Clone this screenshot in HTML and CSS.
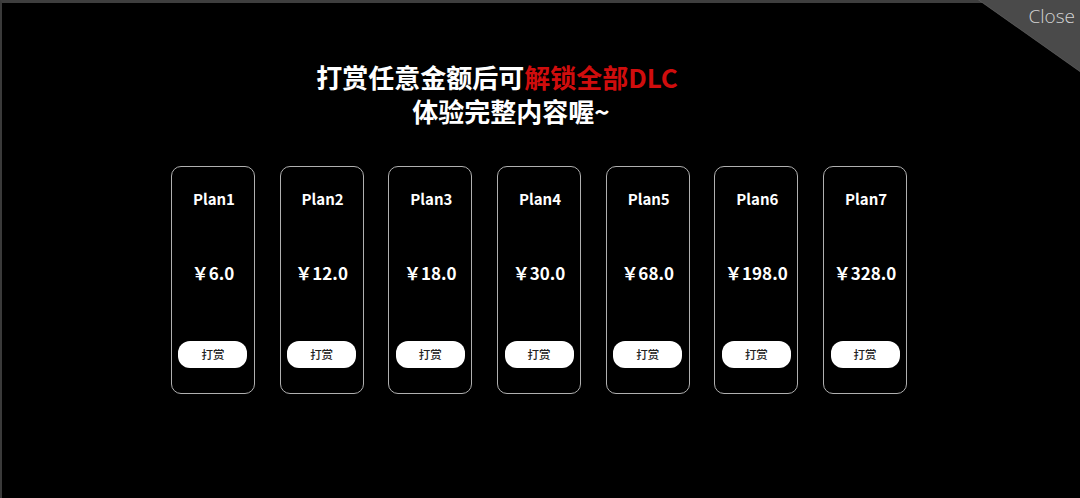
FILE: index.html
```html
<!DOCTYPE html>
<html lang="zh-CN">
<head>
<meta charset="utf-8">
<link rel="stylesheet" href="styles.css">
</head>
<body>
<div class="dialog">
  <div class="close-corner"><span class="close-text">Close</span></div>
  <div class="title">
    <div class="line line-1">打赏任意金额后可<span class="red">解锁全部DLC</span></div>
    <div class="line line-2">体验完整内容喔~</div>
  </div>
  <div class="plans">
    <div class="card"><div class="plan">Plan1</div><div class="price">￥6.0</div><div class="btn">打赏</div></div>
    <div class="card"><div class="plan">Plan2</div><div class="price">￥12.0</div><div class="btn">打赏</div></div>
    <div class="card"><div class="plan">Plan3</div><div class="price">￥18.0</div><div class="btn">打赏</div></div>
    <div class="card"><div class="plan">Plan4</div><div class="price">￥30.0</div><div class="btn">打赏</div></div>
    <div class="card"><div class="plan">Plan5</div><div class="price">￥68.0</div><div class="btn">打赏</div></div>
    <div class="card"><div class="plan">Plan6</div><div class="price">￥198.0</div><div class="btn">打赏</div></div>
    <div class="card"><div class="plan">Plan7</div><div class="price">￥328.0</div><div class="btn">打赏</div></div>
  </div>
</div>
</body>
</html>
```
FILE: styles.css
```css
html, body {
  margin: 0;
  padding: 0;
  background: #000;
}
body {
  width: 1080px;
  height: 498px;
  overflow: hidden;
  font-family: "Noto Sans CJK SC", "Noto Sans", sans-serif;
}
.dialog {
  position: relative;
  box-sizing: border-box;
  width: 1080px;
  height: 498px;
  background: #000;
  border-top: 3px solid #3e3e3e;
  border-left: 2px solid #3a3a3a;
  padding-top: 57px;
}
.close-corner {
  position: absolute;
  top: -3px;
  right: 0;
  width: 102px;
  height: 72px;
  background: linear-gradient(to bottom left, #4a4a4a 0, #4a4a4a 49%, #5c5c5c 50%, transparent 51%);
  clip-path: polygon(0 0, 100% 0, 100% 100%);
}
.close-text {
  position: absolute;
  right: 5px;
  top: 4px;
  font-family: "Open Sans", sans-serif;
  font-weight: 300;
  font-size: 19px;
  line-height: 24px;
  color: #d4d4d4;
}
.title {
  text-align: center;
  color: #fff;
  font-weight: 700;
  font-size: 26px;
  line-height: 34px;
  margin-left: -2px;
}
.line-1 {
  padding-right: 86px;
}
.line-2 {
  padding-right: 58px;
}
.red {
  color: #d00d0d;
}
.plans {
  display: flex;
  justify-content: center;
  gap: 24.7px;
  margin-top: 38px;
  margin-left: -4px;
}
.card {
  box-sizing: border-box;
  width: 84px;
  height: 228px;
  border: 1px solid #b0b0b0;
  border-radius: 10px;
  display: flex;
  flex-direction: column;
  align-items: center;
  padding-top: 22px;
  color: #fff;
  font-weight: 700;
}
.plan {
  font-size: 15px;
  line-height: 20px;
  padding-left: 2px;
}
.price {
  font-size: 17px;
  line-height: 24px;
  margin-top: 52px;
}
.btn {
  margin-top: 56px;
  width: 69px;
  height: 27px;
  border-radius: 12px;
  background: #fff;
  color: #222;
  font-size: 11.5px;
  font-weight: 500;
  line-height: 27px;
  text-align: center;
}
```
